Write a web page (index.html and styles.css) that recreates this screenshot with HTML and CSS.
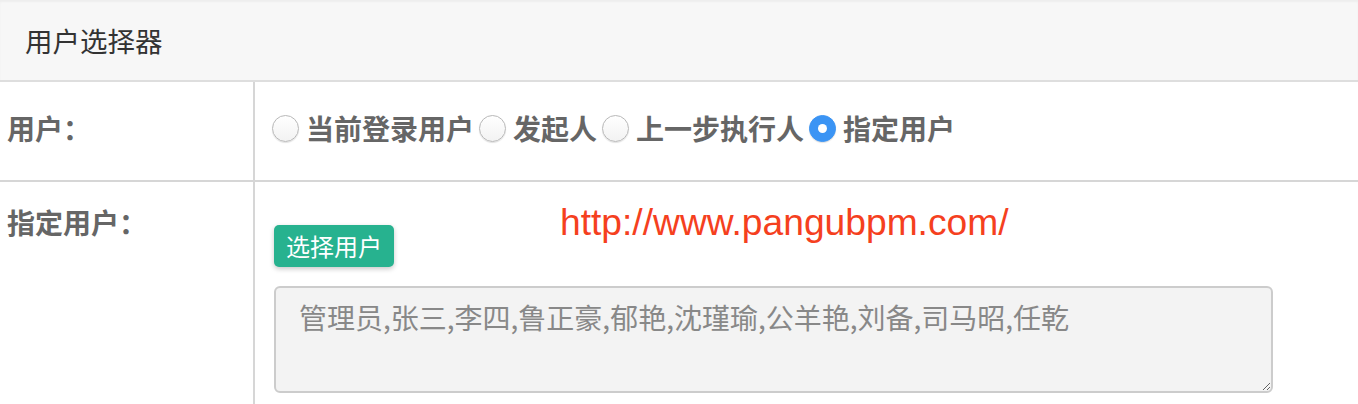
FILE: index.html
```html
<!DOCTYPE html>
<html lang="zh-CN">
<head>
    <meta charset="UTF-8">
    <meta name="viewport" content="width=device-width, initial-scale=1.0">
    <title>用户选择器</title>
    <link rel="stylesheet" href="styles.css">
</head>
<body>
    <div class="panel">
        <div class="panel-header">用户选择器</div>
        <div class="form-row first-row">
            <div class="form-label">用户：</div>
            <div class="form-field radio-group">
                <label class="radio-item"><input type="radio" name="userType"><span>当前登录用户</span></label>
                <label class="radio-item"><input type="radio" name="userType"><span>发起人</span></label>
                <label class="radio-item"><input type="radio" name="userType"><span>上一步执行人</span></label>
                <label class="radio-item"><input type="radio" name="userType" checked><span>指定用户</span></label>
            </div>
        </div>
        <div class="form-row second-row">
            <div class="form-label">指定用户：</div>
            <div class="form-field">
                <button type="button" class="button select-button">选择用户</button>
                <textarea class="user-list" readonly>管理员,张三,李四,鲁正豪,郁艳,沈瑾瑜,公羊艳,刘备,司马昭,任乾</textarea>
            </div>
            <div class="watermark">http://www.pangubpm.com/</div>
        </div>
    </div>
</body>
</html>
```

FILE: styles.css
```css
body {
    margin: 0;
    padding: 0;
    background-color: #ffffff;
    font-family: "Noto Sans CJK SC", "Noto Sans", sans-serif;
    overflow: hidden;
}

.panel {
    width: 100%;
}

.panel-header {
    height: 80px;
    line-height: 80px;
    padding-left: 25px;
    font-size: 27.5px;
    color: #333;
    background-color: #f7f7f7;
    border-bottom: 2px solid #dedede;
    box-shadow: inset 0 2px 2px rgba(0, 0, 0, 0.04);
}

.form-row {
    display: grid;
    grid-template-columns: 255px 1fr;
    position: relative;
}

.first-row {
    border-bottom: 2px solid #d6d6d6;
}

.form-label {
    padding-left: 7px;
    border-right: 2px solid #d6d6d6;
    font-size: 28px;
    line-height: 40px;
    font-weight: bold;
    color: #666;
}

.first-row .form-label,
.first-row .form-field {
    padding-top: 26px;
    padding-bottom: 32px;
}

.second-row .form-label {
    padding-top: 20px;
    height: 202px;
}

.form-field {
    padding-left: 19px;
}

.radio-group {
    display: flex;
    align-items: center;
    padding-left: 17px;
}

.radio-item {
    display: flex;
    align-items: center;
    gap: 7px;
    margin-right: 5px;
    font-size: 28px;
    line-height: 40px;
    font-weight: bold;
    color: #666;
}

.radio-item input {
    appearance: none;
    -webkit-appearance: none;
    width: 27px;
    height: 27px;
    margin: 0;
    border: 1px solid #b8b8b8;
    border-radius: 50%;
    background: linear-gradient(#ffffff, #f2f2f2);
    box-shadow: 0 1px 1px rgba(0, 0, 0, 0.12);
    box-sizing: border-box;
    position: relative;
}

.radio-item input:checked {
    border-color: #3b94f4;
    background: #3b94f4;
}

.radio-item input:checked::after {
    content: "";
    position: absolute;
    left: 50%;
    top: 50%;
    width: 9px;
    height: 9px;
    margin: -4.5px 0 0 -4.5px;
    border-radius: 50%;
    background-color: #ffffff;
}

.button {
    display: block;
    margin-top: 43px;
    height: 42px;
    padding: 0 12px;
    border: none;
    border-radius: 5px;
    font-family: inherit;
    font-size: 24px;
    line-height: 42px;
    color: #fff;
    box-shadow: 0 2px 5px rgba(0, 0, 0, 0.22);
}

.select-button {
    background-color: #27b28f;
}

.user-list {
    display: block;
    margin-top: 19px;
    width: 999px;
    height: 107px;
    padding: 9px 23px;
    border: 2px solid #cccccc;
    border-radius: 6px;
    background-color: #f3f3f3;
    font-family: inherit;
    font-size: 28px;
    line-height: 40px;
    color: #888;
    box-sizing: border-box;
    outline: none;
}

.watermark {
    position: absolute;
    left: 560px;
    top: 19px;
    font-family: "Liberation Sans", Arial, sans-serif;
    font-size: 37.2px;
    color: #f5401e;
}
```
